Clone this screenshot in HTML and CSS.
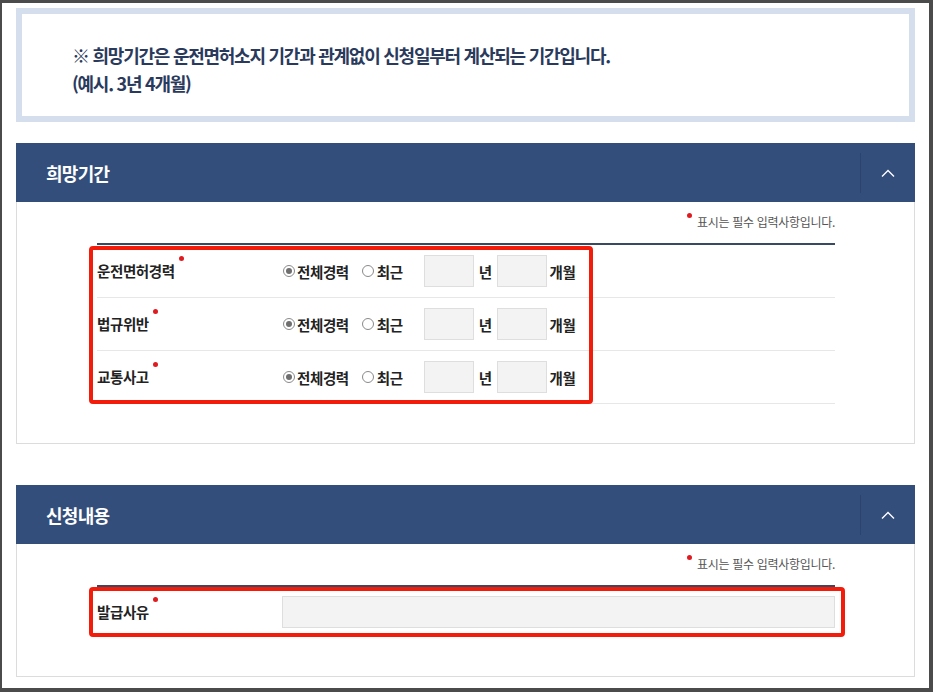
FILE: index.html
```
<!doctype html>
<html lang="ko">
<head>
  <meta charset="utf-8">
  <link rel="stylesheet" href="styles.css">
</head>
<body>
  <div class="frame">

    <div class="notice">
      <p>※ 희망기간은 운전면허소지 기간과 관계없이 신청일부터 계산되는 기간입니다.</p>
      <p>(예시. 3년 4개월)</p>
    </div>

    <div class="section">
      <div class="sectionHead">
        <h2>희망기간</h2>
        <button class="toggle">
          <svg width="14" height="8" viewBox="0 0 14 8"><polyline points="1,7.5 7,1.5 13,7.5" fill="none" stroke="#fff" stroke-width="1.4"/></svg>
        </button>
      </div>
      <div class="panel">
        <p class="reqNote"><span class="dot"></span>표시는 필수 입력사항입니다.</p>
        <div class="formTable">
          <div class="row">
            <div class="label">운전면허경력<span class="dot req"></span></div>
            <span class="radio checked"></span><span class="opt">전체경력</span>
            <span class="radio second"></span><span class="opt">최근</span>
            <span class="field"></span><span class="unit">년</span>
            <span class="field small"></span><span class="unit last">개월</span>
          </div>
          <div class="row">
            <div class="label">법규위반<span class="dot req"></span></div>
            <span class="radio checked"></span><span class="opt">전체경력</span>
            <span class="radio second"></span><span class="opt">최근</span>
            <span class="field"></span><span class="unit">년</span>
            <span class="field small"></span><span class="unit last">개월</span>
          </div>
          <div class="row">
            <div class="label">교통사고<span class="dot req"></span></div>
            <span class="radio checked"></span><span class="opt">전체경력</span>
            <span class="radio second"></span><span class="opt">최근</span>
            <span class="field"></span><span class="unit">년</span>
            <span class="field small"></span><span class="unit last">개월</span>
          </div>
          <div class="mark mark1"></div>
        </div>
      </div>
    </div>

    <div class="section second">
      <div class="sectionHead">
        <h2>신청내용</h2>
        <button class="toggle">
          <svg width="14" height="8" viewBox="0 0 14 8"><polyline points="1,7.5 7,1.5 13,7.5" fill="none" stroke="#fff" stroke-width="1.4"/></svg>
        </button>
      </div>
      <div class="panel">
        <p class="reqNote"><span class="dot"></span>표시는 필수 입력사항입니다.</p>
        <div class="formTable">
          <div class="row wide">
            <div class="label">발급사유<span class="dot req"></span></div>
            <span class="field long"></span>
          </div>
          <div class="mark mark2"></div>
        </div>
      </div>
    </div>

  </div>
</body>
</html>
```

FILE: styles.css
```
    body{
      margin:0;
      font-family: "Noto Sans CJK KR", "Noto Sans", sans-serif;
    }
    .frame{
      width: 933px;
      height: 692px;
      box-sizing: border-box;
      border-style: solid;
      border-color: #4b4b4b;
      border-width: 3px 4px 4px 2px;
      padding: 5px 14px 0 14px;
      overflow: hidden;
      background: #fff;
    }
    .notice{
      border: 6px solid #d5deed;
      padding: 27px 0 19px 50px;
      color: #2a3a5c;
      font-weight: bold;
      font-size: 18px;
      letter-spacing: -1.25px;
      line-height: 28px;
    }
    .notice p{
      margin: 0;
    }
    .section{
      margin-top: 21px;
    }
    .section.second{
      margin-top: 41px;
    }
    .sectionHead{
      height: 59px;
      background: #344e7b;
      display: flex;
      align-items: center;
      justify-content: space-between;
      padding-left: 30px;
    }
    .sectionHead h2{
      margin: 0;
      color: #fff;
      font-size: 18px;
      letter-spacing: -0.7px;
      font-weight: bold;
    }
    .toggle{
      width: 55px;
      height: 40px;
      border: none;
      border-left: 1px solid #2c4370;
      background: none;
      padding: 0;
      display: flex;
      align-items: center;
      justify-content: center;
    }
    .panel{
      border: 1px solid #dcdcdc;
      border-top: none;
      padding: 11px 79px 39px 80px;
    }
    .reqNote{
      margin: 0;
      text-align: right;
      font-size: 12px;
      line-height: 18px;
      color: #555;
      letter-spacing: -0.3px;
    }
    .dot{
      display: inline-block;
      width: 5px;
      height: 5px;
      border-radius: 50%;
      background: #e01b1f;
      vertical-align: top;
      margin: 0 5px 0 0;
    }
    .dot.req{
      margin: -5px 0 0 4px;
    }
    .formTable{
      margin-top: 12px;
      border-top: 2px solid #3a4862;
      position: relative;
    }
    .row{
      height: 52px;
      border-bottom: 1px solid #e7e7e7;
      display: flex;
      align-items: center;
      font-size: 14.5px;
      font-weight: bold;
      color: #222;
      letter-spacing: -0.4px;
    }
    .row.wide{
      height: 50px;
      border-bottom: none;
    }
    .label{
      width: 186px;
      flex-shrink: 0;
      line-height: 20px;
    }
    .radio{
      width: 12px;
      height: 12px;
      box-sizing: border-box;
      border: 1px solid #8a8a8a;
      border-radius: 50%;
      background: #fff;
      margin-right: 2px;
      position: relative;
    }
    .radio.checked::after{
      content: "";
      position: absolute;
      left: 2px;
      top: 2px;
      width: 6px;
      height: 6px;
      border-radius: 50%;
      background: #6f6f6f;
    }
    .radio.second{
      margin-left: 13px;
      margin-right: 3px;
    }
    .field{
      width: 50px;
      height: 32px;
      box-sizing: border-box;
      border: 1px solid #dedede;
      background: #f3f3f3;
      margin-left: 21px;
    }
    .field.small{
      margin-left: 5px;
    }
    .field.long{
      width: 553px;
      margin-left: -1px;
    }
    .unit{
      margin-left: 5px;
    }
    .unit.last{
      margin-left: 3px;
    }
    .mark{
      position: absolute;
      left: -8px;
      border: 4px solid #f31c0b;
      border-radius: 4px;
      box-sizing: border-box;
    }
    .mark1{
      top: 1px;
      width: 504px;
      height: 158px;
    }
    .mark2{
      top: 0px;
      width: 756px;
      height: 50px;
    }
```
